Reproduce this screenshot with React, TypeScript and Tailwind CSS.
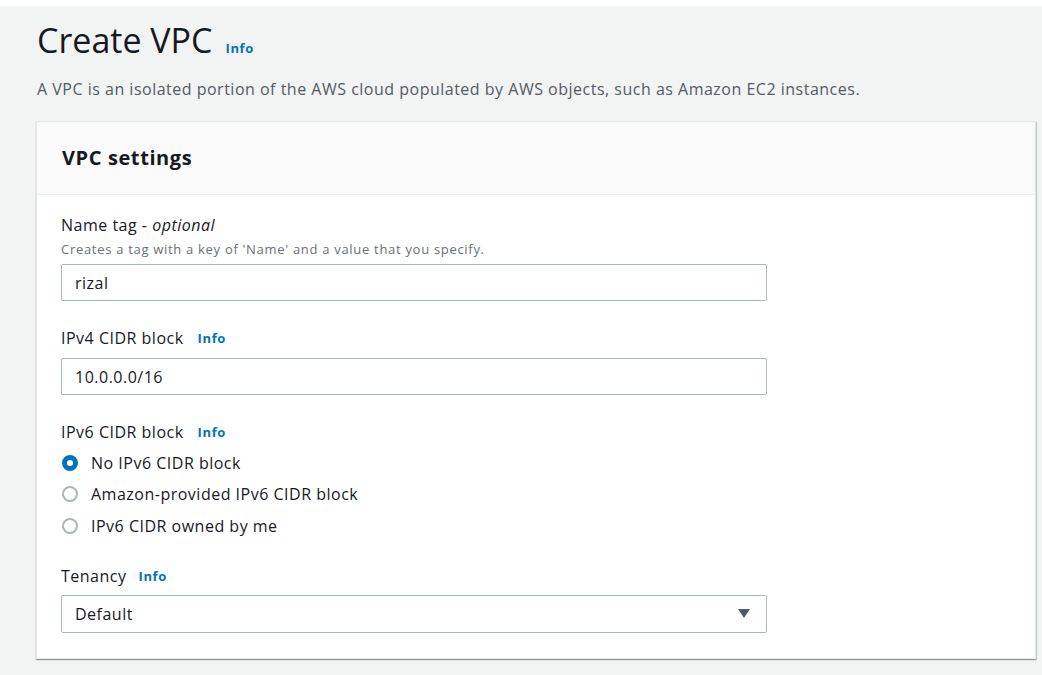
const font = { fontFamily: '"Open Sans", "Noto Sans", Arial, sans-serif' };

const Info = ({ className = "" }: { className?: string }) => (
  <span className={`text-[13px] font-bold tracking-[0.6px] text-[#0073bb] ${className}`}>Info</span>
);

const Radio = ({ checked, label }: { checked?: boolean; label: string }) => (
  <label className="flex items-center h-[31.5px]">
    {checked ? (
      <span className="w-4 h-4 rounded-full border-[5px] border-[#0073bb] bg-white box-border" />
    ) : (
      <span className="w-4 h-4 rounded-full border-2 border-[#aab7b8] bg-white box-border" />
    )}
    <span className="ml-[13px] text-base tracking-[0.5px] text-[#16191f]">{label}</span>
  </label>
);

const TextInput = ({ value }: { value: string }) => (
  <div className="w-[706px] h-[37px] border border-[#aab7b8] rounded-[2px] bg-white flex items-center px-[13px] text-base tracking-[0.5px] text-[#16191f]">
    {value}
  </div>
);

export default function App() {
  return (
    <div style={font} className="w-[1042px] h-[675px] bg-white overflow-hidden">
      <div className="mt-[6px] h-[669px] bg-[#f2f3f3] pl-[36px] pr-[6px]">
        <div className="flex items-end pt-[13px] pl-px">
          <h1 className="text-[34px] leading-[42px] text-[#16191f] font-normal">Create VPC</h1>
          <Info className="ml-[13px] mb-[3px]" />
        </div>
        <p className="mt-[18px] pl-px text-base leading-5 tracking-[0.5px] text-[#545b64]">
          A VPC is an isolated portion of the AWS cloud populated by AWS objects, such as Amazon EC2 instances.
        </p>

        <div className="mt-[22px] w-[1000px] bg-white border border-[#e3e6e6] shadow-[0_1px_1px_0_rgba(0,28,36,0.3),1px_1px_1px_0_rgba(0,28,36,0.15)]">
          <div className="h-[73px] bg-[#fafafa] border-b border-[#eaeded] flex items-center px-[25px]">
            <h2 className="text-xl font-bold tracking-[0.6px] text-[#16191f]">VPC settings</h2>
          </div>

          <div className="px-[24px] pt-[20px] pb-[25px]">
            <div className="text-base leading-5 tracking-[0.5px] text-[#16191f]">
              Name tag - <i>optional</i>
            </div>
            <div className="text-[13px] leading-4 tracking-[0.7px] text-[#687078] mt-[6px]">
              Creates a tag with a key of 'Name' and a value that you specify.
            </div>
            <div className="mt-[7px]">
              <TextInput value="rizal" />
            </div>

            <div className="mt-[27px] flex items-center text-base leading-5 tracking-[0.5px] text-[#16191f]">
              IPv4 CIDR block <Info className="ml-[14px]" />
            </div>
            <div className="mt-[10px]">
              <TextInput value="10.0.0.0/16" />
            </div>

            <div className="mt-[27px] flex items-center text-base leading-5 tracking-[0.5px] text-[#16191f]">
              IPv6 CIDR block <Info className="ml-[14px]" />
            </div>
            <div className="mt-[5px] pl-px">
              <Radio checked label="No IPv6 CIDR block" />
              <Radio label="Amazon-provided IPv6 CIDR block" />
              <Radio label="IPv6 CIDR owned by me" />
            </div>

            <div className="mt-[24px] flex items-center text-base leading-5 tracking-[0.5px] text-[#16191f]">
              Tenancy <Info className="ml-[12px]" />
            </div>
            <div className="mt-[9px] w-[706px] h-[38px] border border-[#aab7b8] rounded-[2px] bg-white flex items-center justify-between pl-[13px] pr-[16px] text-base tracking-[0.5px] text-[#16191f]">
              <span>Default</span>
              <svg width="12" height="9" viewBox="0 0 12 9">
                <path d="M0 0 H12 L6 9 Z" fill="#545b64" />
              </svg>
            </div>
          </div>
        </div>
      </div>
    </div>
  );
}
